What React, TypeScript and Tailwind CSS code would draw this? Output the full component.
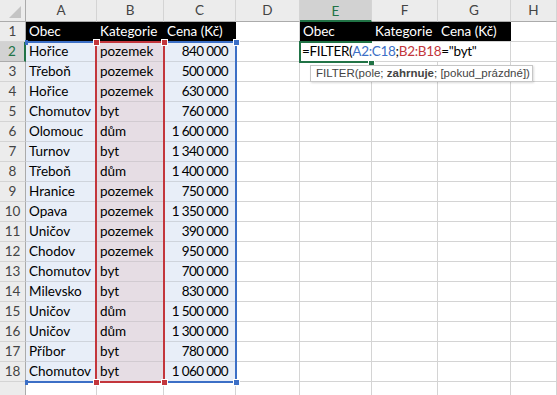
import React from 'react'

const cols = ['A', 'B', 'C', 'D', 'E', 'F', 'G', 'H']

const data: [string, string, string][] = [
  ['Hořice', 'pozemek', '840 000'],
  ['Třeboň', 'pozemek', '500 000'],
  ['Hořice', 'pozemek', '630 000'],
  ['Chomutov', 'byt', '760 000'],
  ['Olomouc', 'dům', '1 600 000'],
  ['Turnov', 'byt', '1 340 000'],
  ['Třeboň', 'dům', '1 400 000'],
  ['Hranice', 'pozemek', '750 000'],
  ['Opava', 'pozemek', '1 350 000'],
  ['Uničov', 'pozemek', '390 000'],
  ['Chodov', 'pozemek', '950 000'],
  ['Chomutov', 'byt', '700 000'],
  ['Milevsko', 'byt', '830 000'],
  ['Uničov', 'dům', '1 500 000'],
  ['Uničov', 'dům', '1 300 000'],
  ['Příbor', 'byt', '780 000'],
  ['Chomutov', 'byt', '1 060 000'],
]

const cell = 'h-[20px] border-r border-b border-[#d4d4d4] flex items-end pb-[1px] px-[3px] whitespace-nowrap leading-[18px]'
const blueCell = 'h-[20px] border-r border-b border-[#cfd4dc] bg-[#e8eef8] flex items-end pb-[1px] px-[3px] whitespace-nowrap leading-[18px]'
const redCell = 'h-[20px] border-r border-b border-[#d2cbd1] bg-[#e6dde4] flex items-end pb-[1px] px-[3px] whitespace-nowrap leading-[18px]'
const blackCell = 'h-[20px] border-b border-[#d4d4d4] bg-black text-white flex items-end pb-[1px] px-[3px] whitespace-nowrap leading-[18px]'

function RowHead({ n, active }: { n?: number; active?: boolean }) {
  return (
    <div
      className={
        active
          ? 'h-[20px] border-b border-[#ababab] border-r-2 border-r-[#217346] bg-[#d2d2d2] text-[#217346] flex items-center justify-center'
          : 'h-[20px] border-b border-[#d4d4d4] border-r border-r-[#ababab] bg-[#ececec] text-[#444] flex items-center justify-center'
      }
    >
      {n}
    </div>
  )
}

function Corner({ x, y, color }: { x: number; y: number; color: string }) {
  return (
    <div
      className="absolute w-[5px] h-[5px] border border-white box-content"
      style={{ left: x - 1, top: y - 1, background: color }}
    />
  )
}

export default function App() {
  const blue = '#3c6fc6'
  const red = '#c3363c'
  return (
    <div className="relative w-[557px] h-[395px] overflow-hidden bg-white text-[13.5px] text-black font-['Lato',sans-serif]">
      <div className="grid grid-cols-[26px_71px_67px_72px_64px_72px_66px_73px_1fr]">
        {/* header */}
        <div className="h-[22px] border-r border-b border-[#ababab] bg-[#ececec] relative">
          <svg className="absolute left-[9px] top-[6px]" width="13" height="13" viewBox="0 0 13 13">
            <polygon points="0,12 12,12 12,0" fill="#c4c4c4" />
          </svg>
        </div>
        {cols.map((c) => (
          <div
            key={c}
            className={
              c === 'E'
                ? 'h-[22px] border-r border-[#d4d4d4] border-b-2 border-b-[#217346] bg-[#d2d2d2] text-[#217346] flex items-center justify-center pt-[2px]'
                : 'h-[22px] border-r border-[#d4d4d4] border-b border-b-[#ababab] bg-[#ececec] text-[#444] flex items-center justify-center'
            }
          >
            {c}
          </div>
        ))}

        {/* row 1 */}
        <RowHead n={1} />
        <div className={blackCell}>Obec</div>
        <div className={blackCell}>Kategorie</div>
        <div className={blackCell}>Cena (Kč)</div>
        <div className={cell}></div>
        <div className={blackCell}>Obec</div>
        <div className={blackCell}>Kategorie</div>
        <div className={blackCell}>Cena (Kč)</div>
        <div className={cell}></div>

        {data.map(([obec, kat, cena], i) => (
          <React.Fragment key={i}>
            <RowHead n={i + 2} active={i === 0} />
            <div className={blueCell}>{obec}</div>
            <div className={redCell}>{kat}</div>
            <div className={blueCell + ' justify-end pr-[7px] tracking-[-0.6px]'}>{cena}</div>
            <div className={cell}></div>
            {i === 0 ? (
              <>
                <div className="h-[20px] border-b border-[#d4d4d4] flex items-end pb-[1px] pl-[2px] whitespace-nowrap leading-[18px] relative z-10 overflow-visible tracking-[-0.3px]">
                  <span>
                    =FILTER(<span className="text-[#3c6fc6]">A2:C18</span>;
                    <span className="text-[#c3363c]">B2:B18</span>="byt"
                  </span>
                  <span className="inline-block w-px h-[16px] bg-black ml-[2px] mb-[1px]" />
                </div>
                <div className="h-[20px] border-b border-[#d4d4d4]"></div>
                <div className={cell}></div>
              </>
            ) : (
              <>
                <div className={cell}></div>
                <div className={cell}></div>
                <div className={cell}></div>
              </>
            )}
            <div className={cell}></div>
          </React.Fragment>
        ))}

        <RowHead />
        {cols.map((c) => (
          <div key={c} className={cell}></div>
        ))}
      </div>

      {/* blue range A2:C18 */}
      <div className="absolute left-[26px] top-[41px] w-[211px] h-[342px] border-2 border-l-0 border-[#3c6fc6]" />
      {/* red range B2:B18 */}
      <div className="absolute left-[95px] top-[41px] w-[70px] h-[342px] border-2 border-[#c3363c]" />
      <div className="absolute left-[25px] top-[40px] w-[3px] h-[5px] bg-[#3c6fc6]" />
      <div className="absolute left-[25px] top-[380px] w-[3px] h-[5px] bg-[#3c6fc6]" />
      <Corner x={234} y={40} color={blue} />
      <Corner x={234} y={380} color={blue} />
      <Corner x={94} y={40} color={red} />
      <Corner x={162} y={40} color={red} />
      <Corner x={94} y={380} color={red} />
      <Corner x={162} y={380} color={red} />

      {/* active cell E2 */}
      <div className="absolute left-[299px] top-[41px] w-[73px] h-[22px] border-2 border-r-0 border-[#217346] z-20" />
      <div className="absolute left-[368px] top-[60px] w-[5px] h-[5px] bg-[#217346] border border-white box-content z-20" />

      {/* tooltip */}
      <div className="absolute left-[310px] top-[65px] w-[223px] h-[17px] border border-[#c6c6c6] bg-white shadow-[1px_1px_2px_rgba(0,0,0,0.15)] z-30 flex items-center pl-[5px] text-[11.5px] text-[#444] whitespace-nowrap font-['Liberation_Sans',sans-serif]">
        <span>
          FILTER(pole; <b className="font-bold">zahrnuje</b>; [pokud_prázdné])
        </span>
      </div>
    </div>
  )
}
